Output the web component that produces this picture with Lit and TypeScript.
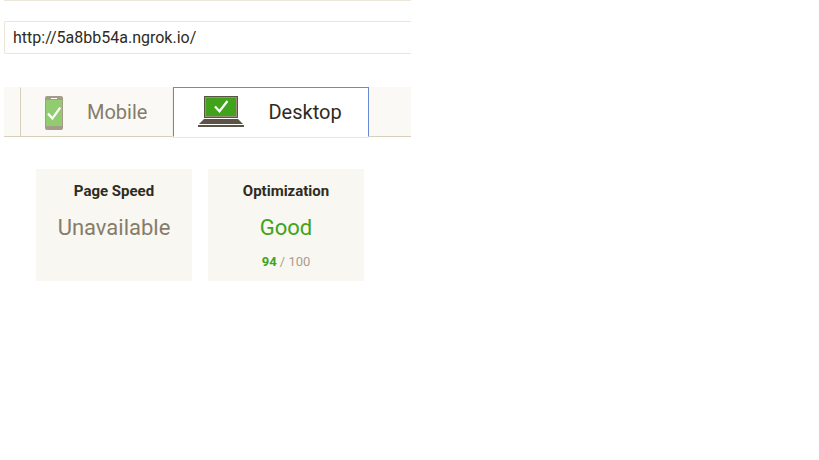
import { LitElement, html, css, svg, nothing } from "lit";
import { customElement, property, state } from "lit/decorators.js";
import { classMap } from "lit/directives/class-map.js";

type Device = "mobile" | "desktop";

const phoneIcon = svg`
  <svg class="icon" width="18" height="34" viewBox="0 0 18 34" aria-hidden="true">
    <rect width="18" height="34" rx="2" fill="#a59b89"/>
    <rect x="1" y="4" width="16" height="26" fill="#91cd70"/>
    <rect x="6" y="2" width="6" height="1" fill="#fff"/>
    <path d="M3 17.6 L7.4 22.4 L15.2 11.6" fill="none" stroke="#fff" stroke-width="2.2"/>
  </svg>`;

const laptopIcon = svg`
  <svg class="icon" width="46" height="31" viewBox="0 0 46 31" aria-hidden="true">
    <rect x="6" width="34" height="22" fill="#5b5346"/>
    <rect x="7" y="1" width="32" height="20" fill="#9b8f78"/>
    <rect x="8" y="2" width="30" height="18" fill="#40a31b"/>
    <path d="M17 10.5 L21.5 15.2 L29.5 5" fill="none" stroke="#fff" stroke-width="2.2"/>
    <path d="M6 23 H40 L45 28 H1 Z" fill="#5b5346"/>
    <rect y="29" width="46" height="2" fill="#5b5346"/>
  </svg>`;

@customElement("score-card")
export class ScoreCard extends LitElement {
  @property() heading = "";
  @property() rating = "";
  @property({ type: Number }) score?: number;

  static styles = css`
    :host {
      display: block;
      box-sizing: border-box;
      min-height: 112px;
      padding: 12px 8px 8px;
      background: #f8f7f2;
      text-align: center;
    }
    h2, p { margin: 0; }
    .heading { font-size: 15px; line-height: 20px; font-weight: 700; color: #2f2b22; }
    .rating { margin-top: 12px; font-size: 22px; line-height: 30px; color: #867c6a; }
    .good { color: #40a31b; }
    .score { margin-top: 8px; font-size: 13px; line-height: 22px; color: #a99f8c; }
    .score strong { color: #40a31b; }
  `;

  render() {
    const scored = this.score !== undefined;
    return html`
      <h2 class="heading">${this.heading}</h2>
      <p class=${classMap({ rating: true, good: scored })}>${this.rating}</p>
      ${scored ? html`<p class="score"><strong>${this.score}</strong> / 100</p>` : nothing}
    `;
  }
}

@customElement("app-root")
export class AppRoot extends LitElement {
  @state() private device: Device = "desktop";

  static styles = css`
    :host {
      display: grid;
      grid-template-columns: 1fr 1fr;
      column-gap: 1px;
      padding-left: 4px;
      background: #fff;
      font-family: Roboto, "Liberation Sans", sans-serif;
    }
    .panel { min-width: 0; border-top: 1px solid #ebe8da; }
    .url {
      display: block;
      box-sizing: border-box;
      width: 100%;
      height: 33px;
      margin: 20px 0 33px;
      padding: 0 8px;
      border: 1px solid #ebe8da;
      border-right: 0;
      border-radius: 2px 0 0 2px;
      outline: 0;
      background: #fff;
      color: #2f2b22;
      font: 16px Roboto, "Liberation Sans", sans-serif;
    }
    .tabs {
      display: flex;
      height: 49px;
      padding-left: 16px;
      border-bottom: 1px solid #d6cfba;
      background: #faf9f5;
    }
    .tab {
      display: flex;
      align-items: center;
      gap: 24px;
      box-sizing: border-box;
      height: 50px;
      margin: 0;
      padding: 0 26px 0 24px;
      border: 1px solid transparent;
      border-right-width: 0;
      border-left-color: #d6cfba;
      background: none;
      color: #867c6a;
      font: 20px Roboto, "Liberation Sans", sans-serif;
      cursor: pointer;
    }
    .selected {
      border: 1px solid #6a88d8;
      border-bottom-color: #fff;
      background: #fff;
      color: #2f2b22;
      box-shadow: 0 1px 0 #ebe8da, -1px 1px 0 #efece3;
    }
    .icon { display: block; flex: none; align-self: flex-start; margin-top: 8px; }
    .cards {
      display: grid;
      grid-template-columns: repeat(2, minmax(0, 156px));
      gap: 16px;
      padding: 32px;
    }
  `;

  private tab(device: Device, label: string, icon: unknown) {
    const selected = this.device === device;
    return html`<button
      class=${classMap({ tab: true, selected })}
      role="tab"
      aria-selected=${selected ? "true" : "false"}
      @click=${() => (this.device = device)}
    >${icon}<span>${label}</span></button>`;
  }

  render() {
    return html`
      <main class="panel">
        <input class="url" type="url" aria-label="Web page URL" value="http://5a8bb54a.ngrok.io/" />
        <div class="tabs" role="tablist">
          ${this.tab("mobile", "Mobile", phoneIcon)}
          ${this.tab("desktop", "Desktop", laptopIcon)}
        </div>
        <section class="cards">
          <score-card heading="Page Speed" rating="Unavailable"></score-card>
          <score-card heading="Optimization" rating="Good" .score=${94}></score-card>
        </section>
      </main>
    `;
  }
}
